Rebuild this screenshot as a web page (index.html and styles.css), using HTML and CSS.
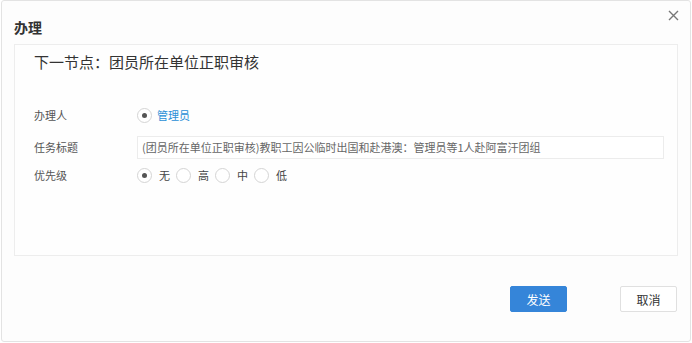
FILE: index.html
```html
<!DOCTYPE html>
<html lang="zh-CN">
<head>
  <meta charset="UTF-8" />
  <title>办理</title>
  <link rel="stylesheet" href="styles.css">
</head>
<body>
  <div class="dialog">
    <div class="dialog-head">
      <span class="dialog-title">办理</span>
      <span class="close">
        <svg width="11" height="11" viewBox="0 0 11 11"><path d="M1 1L10 10M10 1L1 10" stroke="#777" stroke-width="1.4" fill="none"/></svg>
      </span>
    </div>

    <div class="panel">
      <div class="node">下一节点：团员所在单位正职审核</div>

      <div class="form">
        <div class="row row-user">
          <span class="label">办理人</span>
          <span class="field">
            <span class="radio checked"></span>
            <span class="user">管理员</span>
          </span>
        </div>
        <div class="row row-title">
          <span class="label">任务标题</span>
          <span class="field">
            <span class="input">(团员所在单位正职审核)教职工因公临时出国和赴港澳：管理员等1人赴阿富汗团组</span>
          </span>
        </div>
        <div class="row row-level">
          <span class="label">优先级</span>
          <span class="field">
            <span class="radio checked"></span><span class="opt">无</span>
            <span class="radio"></span><span class="opt">高</span>
            <span class="radio"></span><span class="opt">中</span>
            <span class="radio"></span><span class="opt">低</span>
          </span>
        </div>
      </div>
    </div>

    <div class="actions">
      <button class="btn btn-send">发送</button>
      <button class="btn btn-cancel">取消</button>
    </div>
  </div>
</body>
</html>
```

FILE: styles.css
```css
body {
  margin: 0;
  background: #ffffff;
  font-family: "Noto Sans CJK SC", "Noto Sans", sans-serif;
  color: #333;
}

.dialog {
  box-sizing: border-box;
  width: 690px;
  height: 342px;
  margin: 0 0 0 1px;
  border: 1px solid #e3e3e3;
  border-radius: 3px;
  background: #fdfdfd;
}

.dialog-head {
  display: flex;
  justify-content: space-between;
  align-items: center;
  height: 43px;
  padding: 0 12px 0 12px;
}

.dialog-title {
  font-size: 14px;
  font-weight: bold;
  color: #333;
  margin-top: 8px;
}

.close {
  display: flex;
  margin-top: -14px;
  margin-right: -1px;
}

.panel {
  box-sizing: border-box;
  width: 664px;
  height: 212px;
  margin-left: 12px;
  border: 1px solid #ededed;
  background: #fefefe;
  padding: 7px 0 0 19px;
}

.node {
  font-size: 15px;
  color: #333;
  line-height: 20px;
}

.form {
  margin-top: 31px;
}

.row {
  display: flex;
  align-items: center;
  font-size: 11px;
}

.label {
  width: 103px;
  color: #555;
}

.field {
  display: flex;
  align-items: center;
}

.row-user {
  height: 24px;
}

.row-title {
  height: 24px;
  margin-top: 8px;
}

.row-level {
  height: 24px;
  margin-top: 4px;
}

.radio {
  box-sizing: border-box;
  width: 15px;
  height: 15px;
  border: 1px solid #d4d4d4;
  border-radius: 50%;
  background: #fff;
  position: relative;
}

.radio.checked::after {
  content: "";
  position: absolute;
  left: 4px;
  top: 4px;
  width: 5px;
  height: 5px;
  border-radius: 50%;
  background: #555;
}

.user {
  margin-left: 5px;
  color: #2a8fd6;
}

.opt {
  margin: 0 6px 0 7px;
  color: #444;
}

.input {
  box-sizing: border-box;
  width: 527px;
  height: 23px;
  line-height: 21px;
  padding: 0 4px;
  border: 1px solid #ececec;
  background: #fff;
  color: #666;
  white-space: nowrap;
  overflow: hidden;
}

.actions {
  display: flex;
  justify-content: flex-end;
  gap: 53px;
  padding: 30px 13px 0 0;
}

.btn {
  box-sizing: border-box;
  width: 57px;
  height: 26px;
  font-family: inherit;
  font-size: 12px;
  border-radius: 2px;
  cursor: pointer;
}

.btn-send {
  background: #3585d9;
  border: 1px solid #3585d9;
  color: #fff;
}

.btn-cancel {
  background: #fff;
  border: 1px solid #e0e0e0;
  color: #333;
}
```
